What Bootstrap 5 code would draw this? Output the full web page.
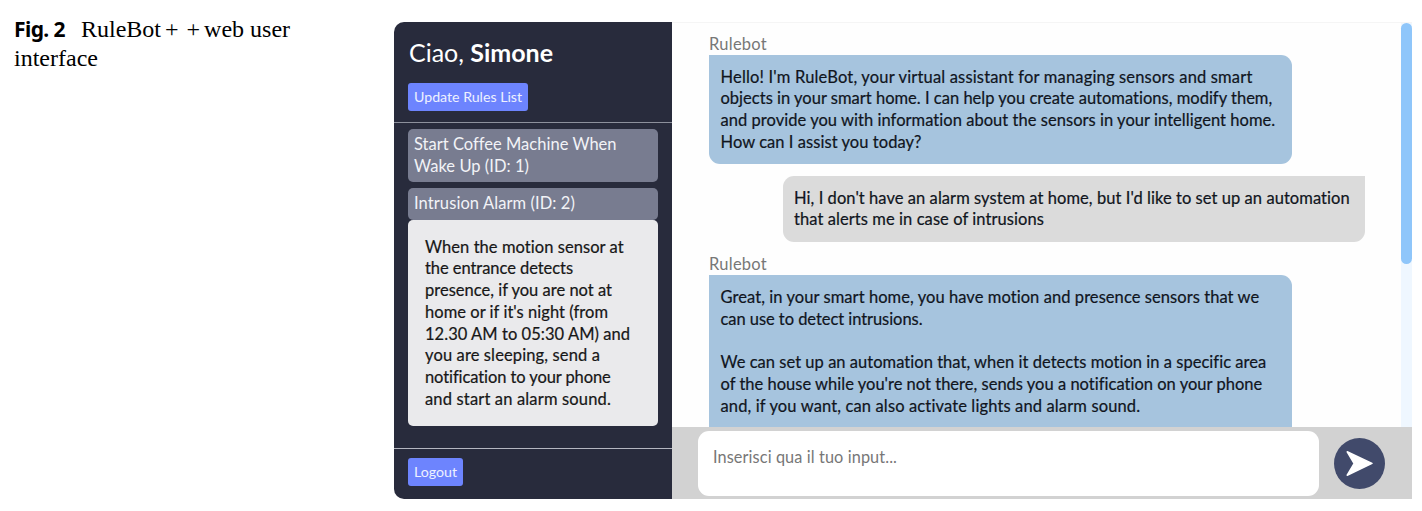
<!DOCTYPE html>
<html lang="en">
<head>
<meta charset="utf-8">
<meta name="viewport" content="width=device-width, initial-scale=1">
<title>RuleBot++</title>
<link rel="stylesheet" href="https://cdn.jsdelivr.net/npm/bootstrap@5.3.0/dist/css/bootstrap.min.css">
<style>
body{background:#fff;height:511px;overflow:hidden;color:#000}
.figure-row{padding:22px 10px 12px 14px;height:511px}
.fig-note{width:380px;font:24px/29px "Liberation Serif",serif;margin-top:-7px}
.fig-label{font:bold 21px/29px "Noto Sans","Open Sans",sans-serif;width:67px}
.app{width:1018px;height:477px;font:16.5px/21.7px Lato,sans-serif;color:#10151d}
.side{width:278px;background:#282b3c;border-radius:10px 0 0 10px;color:#fff}
.side-top{height:101px;padding:12px 15px 0 14px;border-bottom:1.5px solid #8d909c}
.hello{font-size:25px;line-height:36px;margin:0 0 13px 1px;font-weight:400}
.btn-rule{background:#6d84fe;color:#eef1ff;border:0;border-radius:3px;font-size:14.2px;line-height:28px;height:28px;padding:0 6px}
.btn-rule:hover{background:#5b73f0;color:#fff}
.rules{padding:6px 14px 0;gap:6px}
.rule-name{background:#787c90;color:#f2f3f7;border-radius:5px;padding:5px 5px 5px 6px}
.rule-text{background:#eaeaec;color:#171717;border-radius:5px;height:206px;padding:16.6px 17px}
.side-foot{height:51px;border-top:1px solid #b4b6c0;padding:8.5px 14px}
.talk{background:#fefefe;border-top:1px solid #f5f5f5}
.log{padding:9.5px 36px 0 37px;width:729px}
.who{color:#777;line-height:22px;height:22.5px}
.msg{width:582.5px;padding:11.6px 11.5px 11px;border-radius:0 11px 11px 11px;background:#a6c4de}
.msg-user{background:#dbdbdb;border-radius:11px 0 11px 11px;margin:11.5px 0 11px}
.msg,.rule-text{-webkit-text-stroke:.2px currentColor}
.scroll-track{width:11px;background:#eff7ff}
.scroll-thumb{height:241px;border-radius:6px;background:#8fc6fa}
.entry{height:72px;background:#d2d2d2;padding:4px 27px 4px 26px}
.entry-box{width:621px;height:65px;border-radius:11px;background:#fff;border:0;padding:15px;resize:none;outline:0;font-size:16.3px;letter-spacing:.1px}
.entry-box::placeholder{color:#777;opacity:1}
.btn-send{height:51px;margin-top:7px}
.ln{display:block;white-space:nowrap;width:max-content}
</style>
</head>
<body>
<div class="figure-row d-flex">
  <div class="fig-note"><div class="d-flex"><div class="fig-label"><span class="ln" data-w="51">Fig. 2</span></div><span class="ln" data-w="80">RuleBot</span><span class="ms-1">+</span><span class="ms-2 me-1">+</span><span class="ln" data-w="86">web user</span></div><span class="ln" data-w="84">interface</span></div>
  <main class="app d-flex">
    <aside class="side d-flex flex-column flex-shrink-0">
      <div class="side-top">
        <h1 class="hello"><span class="ln" data-w="144">Ciao, <strong>Simone</strong></span></h1>
        <button class="btn btn-rule d-block"><span class="ln" data-w="108">Update Rules List</span></button>
      </div>
      <div class="rules d-flex flex-column flex-grow-1">
        <div class="rule-name"><span class="ln" data-w="202">Start Coffee Machine When</span><span class="ln" data-w="115">Wake Up (ID: 1)</span></div>
        <div>
          <div class="rule-name"><span class="ln" data-w="161">Intrusion Alarm (ID: 2)</span></div>
          <div class="rule-text"><span class="ln" data-w="199">When the motion sensor at</span><span class="ln" data-w="148">the entrance detects</span><span class="ln" data-w="187">presence, if you are not at</span><span class="ln" data-w="183">home or if it's night (from</span><span class="ln" data-w="205">12.30 AM to 05:30 AM) and</span><span class="ln" data-w="175">you are sleeping, send a</span><span class="ln" data-w="186">notification to your phone</span><span class="ln" data-w="186">and start an alarm sound.</span></div>
        </div>
      </div>
      <div class="side-foot"><button class="btn btn-rule d-block"><span class="ln" data-w="43">Logout</span></button></div>
    </aside>
    <section class="talk d-flex flex-column flex-grow-1">
      <div class="d-flex flex-grow-1 overflow-hidden">
        <div class="log">
          <div class="who"><span class="ln" data-w="58">Rulebot</span></div>
          <div class="msg"><span class="ln" data-w="532">Hello! I'm RuleBot, your virtual assistant for managing sensors and smart</span><span class="ln" data-w="552">objects in your smart home. I can help you create automations, modify them,</span><span class="ln" data-w="555">and provide you with information about the sensors in your intelligent home.</span><span class="ln" data-w="201">How can I assist you today?</span></div>
          <div class="msg msg-user ms-auto"><span class="ln" data-w="556">Hi, I don't have an alarm system at home, but I'd like to set up an automation</span><span class="ln" data-w="250">that alerts me in case of intrusions</span></div>
          <div class="who"><span class="ln" data-w="58">Rulebot</span></div>
          <div class="msg"><span class="ln" data-w="539">Great, in your smart home, you have motion and presence sensors that we</span><span class="ln" data-w="202">can use to detect intrusions.</span><br><span class="ln" data-w="546">We can set up an automation that, when it detects motion in a specific area</span><span class="ln" data-w="542">of the house while you're not there, sends you a notification on your phone</span><span class="ln" data-w="420">and, if you want, can also activate lights and alarm sound.</span><br></div>
        </div>
        <div class="scroll-track"><div class="scroll-thumb"></div></div>
      </div>
      <div class="entry d-flex flex-shrink-0">
        <textarea class="entry-box" placeholder="Inserisci qua il tuo input..." aria-label="Message"></textarea>
        <button class="btn btn-send p-0 border-0 ms-auto" aria-label="Send"><svg class="d-block" width="51" height="51" viewBox="0 0 51 51"><circle cx="25.5" cy="25.5" r="25.5" fill="#414a6b"/><path d="M13.2 13.8 38 25.4 13.2 37.2 20.2 25.5Z" fill="#fff" stroke="#fff" stroke-width="1.5" stroke-linejoin="round"/></svg></button>
      </div>
    </section>
  </main>
</div>
<script src="https://cdn.jsdelivr.net/npm/bootstrap@5.3.0/dist/js/bootstrap.bundle.min.js"></script>
<script>
document.querySelectorAll('.ln[data-w]').forEach(function (el) {
  var base = parseFloat(getComputedStyle(el).letterSpacing) || 0;
  var gap = (el.dataset.w - el.getBoundingClientRect().width) / el.textContent.length;
  el.style.letterSpacing = (base + gap) + 'px';
});
</script>
</body>
</html>
